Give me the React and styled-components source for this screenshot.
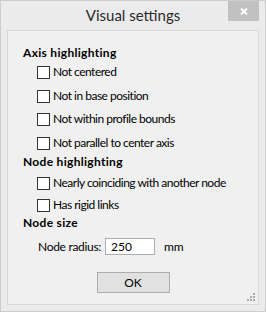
import React, { useState } from 'react';
import styled, { createGlobalStyle } from 'styled-components';

const GlobalStyle = createGlobalStyle`
  html, body {
    margin: 0;
    padding: 0;
    background: #ebebeb;
  }
  body {
    font-family: Lato, "Noto Sans", sans-serif;
    font-size: 12px;
  }
`;

// Window frame
const Window = styled.div`
  width: 266px;
  height: 312px;
  box-sizing: border-box;
  border: 1px solid #cdcdcd;
  background: #ebebeb;
  display: flex;
  flex-direction: column;
`;

const TitleBar = styled.div`
  height: 29px;
  display: grid;
  grid-template-columns: 1fr auto 1fr;
  align-items: start;
`;

const Title = styled.div`
  grid-column: 2;
  font-size: 15px;
  line-height: 20px;
  padding-top: 4px;
  color: #2b2b2b;
`;

const CloseButton = styled.button`
  grid-column: 3;
  justify-self: end;
  margin-right: 6px;
  width: 31px;
  height: 20px;
  border: none;
  padding: 0;
  background: #c1c1c1;
  display: flex;
  align-items: center;
  justify-content: center;
`;

const Panel = styled.div`
  position: relative;
  flex: 1;
  margin: 0 6px 6px 6px;
  border: 1px solid #d9d9d9;
  background: #f0f0f0;
  display: flex;
  flex-direction: column;
  padding: 16px 0 0 15px;
`;

const Heading = styled.div`
  font-weight: bold;
  line-height: 11px;
  letter-spacing: 0.3px;
  color: #000;
  margin-top: ${(p) => p.$top || 0}px;
`;

const CheckList = styled.div`
  display: flex;
  flex-direction: column;
  gap: ${(p) => p.$gap}px;
  margin-top: ${(p) => p.$top}px;
  margin-left: 14px;
`;

const CheckRow = styled.label`
  display: flex;
  align-items: flex-start;
  height: 13px;
  gap: 3px;
  cursor: default;
`;

const Box = styled.span`
  width: 13px;
  height: 13px;
  box-sizing: border-box;
  border: 1px solid #333;
  background: #fff;
  flex-shrink: 0;
`;

const Label = styled.span`
  line-height: 11px;
  letter-spacing: -0.5px;
  color: #000;
  white-space: nowrap;
`;

const FieldRow = styled.div`
  display: flex;
  align-items: center;
  margin-top: 10.5px;
  margin-left: 15px;
  height: 17px;
`;

const FieldLabel = styled.span`
  line-height: 11px;
  letter-spacing: -0.3px;
  width: 67px;
  white-space: nowrap;
  color: #000;
`;

const Input = styled.input`
  width: 50px;
  height: 17px;
  box-sizing: border-box;
  border: 1px solid #abadb3;
  background: #fff;
  padding: 0 5px;
  font: inherit;
  font-size: 12px;
  line-height: 15px;
  color: #000;
  outline: none;
`;

const Unit = styled.span`
  margin-left: 9px;
  line-height: 11px;
  color: #000;
`;

const OkButton = styled.button`
  align-self: center;
  margin: 17px 0 0 -15px;
  width: 73px;
  height: 21px;
  box-sizing: border-box;
  border: 1px solid #adadad;
  background: #e1e1e1;
  font: inherit;
  font-size: 12px;
  color: #000;
  padding: 0;
`;

const Grip = styled.svg`
  position: absolute;
  right: 3px;
  bottom: 3px;
`;

function Check({ label }) {
  const [on, setOn] = useState(false);
  return (
    <CheckRow onClick={() => setOn(!on)}>
      <Box />
      <Label>{label}</Label>
    </CheckRow>
  );
}

export default function App() {
  return (
    <>
      <GlobalStyle />
      <Window>
        <TitleBar>
          <Title>Visual settings</Title>
          <CloseButton aria-label="Close">
            <svg width="8" height="7" viewBox="0 0 8 7">
              <path d="M1 0.5 L7 6.5 M7 0.5 L1 6.5" stroke="#fff" strokeWidth="1.8" />
            </svg>
          </CloseButton>
        </TitleBar>
        <Panel>
          <Heading>Axis highlighting</Heading>
          <CheckList $top={8} $gap={10.6}>
            <Check label="Not centered" />
            <Check label="Not in base position" />
            <Check label="Not within profile bounds" />
            <Check label="Not parallel to center axis" />
          </CheckList>
          <Heading $top={5.8}>Node highlighting</Heading>
          <CheckList $top={10.8} $gap={9}>
            <Check label="Nearly coinciding with another node" />
            <Check label="Has rigid links" />
          </CheckList>
          <Heading $top={4.2}>Node size</Heading>
          <FieldRow>
            <FieldLabel>Node radius:</FieldLabel>
            <Input defaultValue="250" />
            <Unit>mm</Unit>
          </FieldRow>
          <OkButton>OK</OkButton>
          <Grip width="8" height="8" viewBox="0 0 8 8">
            <g fill="#a9a9a9">
              <rect x="6" y="0" width="2" height="2" />
              <rect x="3" y="3" width="2" height="2" />
              <rect x="6" y="3" width="2" height="2" />
              <rect x="0" y="6" width="2" height="2" />
              <rect x="3" y="6" width="2" height="2" />
              <rect x="6" y="6" width="2" height="2" />
            </g>
          </Grip>
        </Panel>
      </Window>
    </>
  );
}
